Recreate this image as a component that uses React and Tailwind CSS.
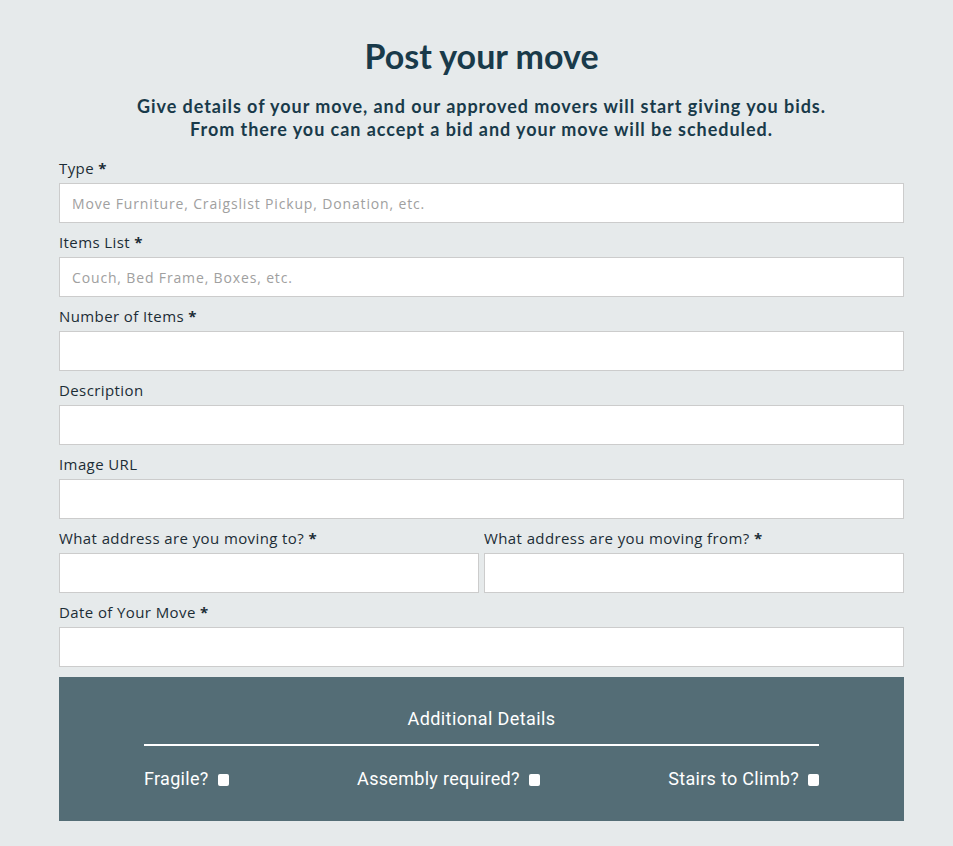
import React from "react";

const fields = [
  { label: "Type", required: true, placeholder: "Move Furniture, Craigslist Pickup, Donation, etc." },
  { label: "Items List", required: true, placeholder: "Couch, Bed Frame, Boxes, etc." },
  { label: "Number of Items", required: true },
  { label: "Description" },
  { label: "Image URL" },
];

const inputClass =
  "block w-full h-10 bg-white border border-[#cccccc] px-3 text-[14px] tracking-[0.85px] text-[#333] placeholder:text-[#a0a0a0] focus:outline-none";

const Label = ({ text, required }) => (
  <label className="block text-[15px] leading-5 tracking-[0.4px] text-[#1c2d36] mb-[5px]">
    {text}
    {required && <span className="font-bold"> *</span>}
  </label>
);

const Check = ({ label }) => (
  <label className="flex items-center gap-[9px] text-[18px] leading-6 tracking-[0.3px] text-white">
    {label}
    <input type="checkbox" className="appearance-none w-[11px] h-[12px] bg-white rounded-[2px] mt-[2px]" />
  </label>
);

export default function App() {
  return (
    <div className="min-h-[846px] bg-[#e6eaeb] pt-[37px]" style={{ fontFamily: "'Open Sans', 'Lato', sans-serif" }}>
      <div className="ml-[59px] w-[845px]">
        <h1 className="text-center text-[34px] leading-[38px] font-bold text-[#193a4a]" style={{ fontFamily: "Lato, sans-serif" }}>
          Post your move
        </h1>
        <p className="mt-[20px] text-center text-[18px] leading-[23px] tracking-[0.95px] font-bold text-[#193a4a]" style={{ fontFamily: "Lato, sans-serif" }}>
          Give details of your move, and our approved movers will start giving you bids.
          <br />
          From there you can accept a bid and your move will be scheduled.
        </p>

        <form className="mt-[17px] flex flex-col gap-[9px]">
          {fields.map((f) => (
            <div key={f.label}>
              <Label text={f.label} required={f.required} />
              <input type="text" placeholder={f.placeholder} className={inputClass} />
            </div>
          ))}

          <div className="grid grid-cols-2 gap-[5px]">
            <div>
              <Label text="What address are you moving to?" required />
              <input type="text" className={inputClass} />
            </div>
            <div>
              <Label text="What address are you moving from?" required />
              <input type="text" className={inputClass} />
            </div>
          </div>

          <div>
            <Label text="Date of Your Move" required />
            <input type="text" className={inputClass} />
          </div>

          {/* Additional details panel */}
          <div className="mt-[1px] h-[144px] bg-[#546d76] pt-[30px] px-[85px]" style={{ fontFamily: "Roboto, sans-serif" }}>
            <h3 className="text-center text-[18px] leading-6 tracking-[0.4px] text-white">Additional Details</h3>
            <div className="mt-[13px] h-[2px] bg-white" />
            <div className="mt-[21px] flex justify-between items-center">
              <Check label="Fragile?" />
              <Check label="Assembly required?" />
              <Check label="Stairs to Climb?" />
            </div>
          </div>
        </form>
      </div>
    </div>
  );
}
